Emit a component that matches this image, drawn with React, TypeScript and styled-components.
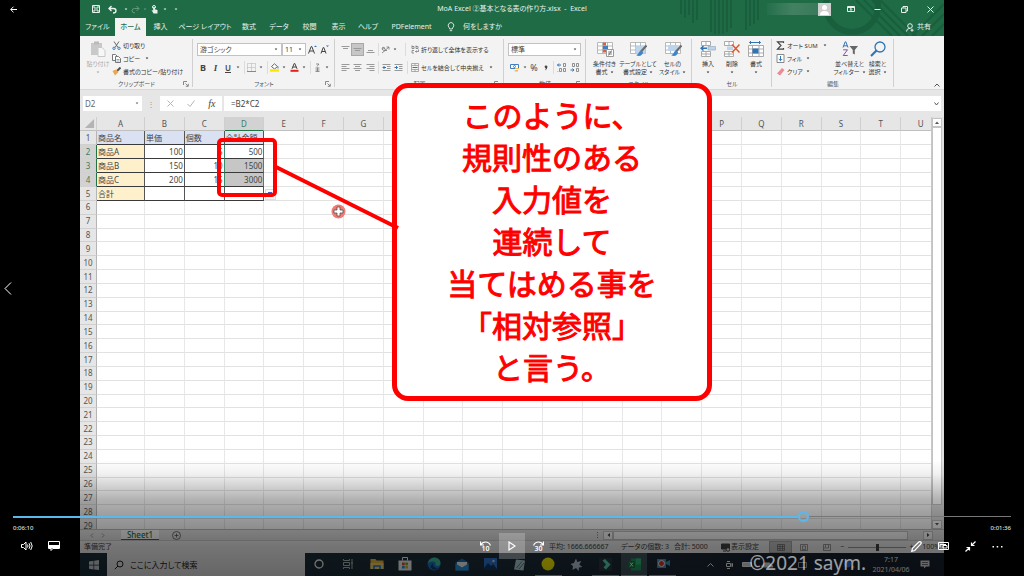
import React from "react";
import styled, { createGlobalStyle, css } from "styled-components";

const GlobalStyle = createGlobalStyle`
  *, *::before, *::after { box-sizing: border-box; }
  body {
    margin: 0;
    background: #000;
    font-family: "Noto Sans", "Noto Sans CJK JP", sans-serif;
    font-feature-settings: "palt";
    overflow: hidden;
  }
  button, input, select {
    font: inherit;
    font-feature-settings: inherit;
    color: inherit;
    border: 0;
    padding: 0;
    margin: 0;
    background: none;
    min-width: 0;
  }
`;

/* ---------- player shell ---------- */

const Player = styled.main`
  position: relative;
  display: grid;
  grid-template-columns: 80px minmax(0, 1fr) 80px;
  min-height: 100vh;
  background: #000;
`;

const Side = styled.div`
  display: flex;
  flex-direction: column;
  justify-content: space-between;
  align-items: flex-start;
  color: #fff;
`;

const SideButton = styled.button`
  display: flex;
  align-items: center;
  justify-content: center;
  width: 26px;
  height: 18px;
`;

const PrevButton = styled(SideButton)`
  width: 16px;
  height: 26px;
`;

const SideFoot = styled.div`
  height: 18px;
`;

const Frame = styled.section`
  position: relative;
  display: flex;
  flex-direction: column;
  min-width: 0;
  height: 100vh;
  min-height: 400px;
  overflow: hidden;
  background: #e6e6e6;
  color: #444;
  font-size: 7px;
  line-height: 8px;
  white-space: nowrap;
`;

/* ---------- title bar and tabs ---------- */

const Head = styled.header`
  position: relative;
  background: #1e6b46;
  color: #e8f1ec;
`;

const HeadArt = styled.svg`
  position: absolute;
  right: 0;
  top: 0;
  width: 264px;
  height: 36px;
`;

const TitleBar = styled.div`
  position: relative;
  display: grid;
  grid-template-columns: 1fr auto 1fr;
  align-items: center;
  height: 18px;
`;

const QuickTools = styled.div`
  display: flex;
  padding-left: 10px;
`;

const TitleRight = styled.div`
  display: flex;
  align-items: center;
  justify-content: flex-end;
  padding-right: 7px;
`;

const Account = styled.div`
  width: 51px;
  height: 12px;
  background: linear-gradient(90deg, #2a7250, #5b8f75 50%, #4b8568);
  opacity: 0.6;
`;

const Tool = styled.button<{ $w: number; $on?: boolean; $faint?: boolean }>`
  display: flex;
  align-items: center;
  justify-content: center;
  flex: none;
  width: ${(p) => p.$w}px;
  height: 13px;
  opacity: ${(p) => (p.$faint ? 0.35 : 1)};
  ${(p) =>
    p.$on &&
    css`
      background: #c6c6c6;
      outline: 1px solid #a8a8a8;
      outline-offset: -1px;
    `}
`;

const TabRow = styled.nav`
  position: relative;
  display: flex;
  align-items: stretch;
  height: 18px;
`;

const Tab = styled.button<{ $w: number; $active?: boolean }>`
  flex: none;
  width: ${(p) => p.$w}px;
  text-align: center;
  ${(p) =>
    p.$active &&
    css`
      background: #f3f3f3;
      color: #1e6b46;
      font-weight: 500;
    `}
`;

const TellMe = styled.button`
  display: flex;
  align-items: center;
  gap: 8px;
  padding-left: 7px;
`;

const Share = styled.button`
  display: flex;
  align-items: center;
  gap: 3px;
  margin-left: auto;
  padding-right: 13px;
`;

/* ---------- ribbon ---------- */

const Ribbon = styled.div`
  display: flex;
  height: 54px;
  flex: none;
  background: #f3f3f3;
  border-bottom: 1px solid #d8d8d8;
`;

const Group = styled.section<{ $w: number }>`
  position: relative;
  display: flex;
  flex-direction: column;
  flex: none;
  width: ${(p) => p.$w}px;
  &::after {
    content: "";
    position: absolute;
    right: 0;
    top: 3px;
    bottom: 2px;
    width: 1px;
    background: #d0d0d0;
  }
`;

const GroupBody = styled.div`
  display: flex;
  height: 44px;
  padding-left: 4px;
`;

const GroupLabel = styled.div`
  display: grid;
  grid-template-columns: 10px 1fr 10px;
  align-items: center;
  height: 10px;
  text-align: center;
  color: #555;
  font-size: 6px;
`;

const Rows = styled.div`
  display: flex;
  flex-direction: column;
  gap: 5px;
  padding-top: 7px;
`;

const Row = styled.div`
  display: flex;
  align-items: center;
  height: 13px;
`;

const List = styled.div`
  display: flex;
  flex-direction: column;
  padding-top: 3px;
`;

const Command = styled.button`
  display: flex;
  align-items: center;
  gap: 2px;
  height: 13px;
  font-size: 6px;
  color: #333;
`;

const Big = styled.button<{ $w: number; $faint?: boolean }>`
  display: flex;
  flex-direction: column;
  align-items: center;
  gap: 3px;
  width: ${(p) => p.$w}px;
  flex: none;
  padding-top: 5px;
  font-size: 6px;
  color: #333;
  white-space: nowrap;
  opacity: ${(p) => (p.$faint ? 0.4 : 1)};
`;

const BigText = styled.span`
  display: flex;
  flex-direction: column;
  align-items: center;
  height: 16px;
`;

const BigLine = styled.span`
  display: flex;
  align-items: center;
  gap: 2px;
  height: 8px;
`;

const Sep = styled.span<{ $w: number }>`
  width: ${(p) => p.$w}px;
  height: 13px;
  flex: none;
  background: linear-gradient(#dcdcdc, #dcdcdc) center / 1px 100% no-repeat;
`;

const Combo = styled.label<{ $w: number }>`
  display: flex;
  align-items: center;
  width: ${(p) => p.$w}px;
  height: 13px;
  padding: 0 3px 0 2px;
  background: #fff;
  border: 1px solid #c2c2c2;
  select {
    flex: 1;
    appearance: none;
    outline: 0;
    line-height: 9px;
  }
`;

const Collapse = styled.button`
  margin-left: auto;
  align-self: flex-end;
  width: 14px;
  height: 9px;
  display: flex;
  align-items: center;
  justify-content: center;
`;

const EditSpacer = styled.span`
  flex: 1;
  & + button + button {
    margin-right: 4px;
  }
`;

const Strong = styled.b`
  font-size: 9px;
`;

const Italic = styled.i`
  font-size: 9px;
  font-weight: 600;
  font-family: "Liberation Serif", serif;
`;

const Under = styled.u`
  font-size: 8px;
  font-weight: 600;
`;

const Glyph = styled.span`
  font-size: 9px;
  color: #444;
`;

const Icon = styled.svg<{ $w?: number; $h?: number }>`
  display: block;
  flex: none;
  width: ${(p) => p.$w ?? 9}px;
  height: ${(p) => p.$h ?? p.$w ?? 9}px;
  fill: none;
  stroke: currentColor;
  stroke-width: 1;
`;

/* ---------- formula bar ---------- */

const FormulaBar = styled.div`
  display: flex;
  flex: none;
  align-items: center;
  height: 27px;
  padding: 0 3px;
  font-size: 8px;
  line-height: 10px;
`;

const NameBox = styled.label`
  display: flex;
  align-items: center;
  width: 59px;
  height: 15px;
  padding: 0 3px 0 2px;
  background: #fff;
  color: #666;
  input {
    flex: 1;
    width: 40px;
  }
`;

const FormulaTools = styled.div`
  display: flex;
  align-items: center;
  justify-content: space-around;
  width: 62px;
  height: 15px;
  margin-right: 2px;
  background: #fff;
`;

const Handle = styled.span`
  width: 18px;
  text-align: center;
  color: #999;
`;

const FormulaInput = styled.label`
  display: flex;
  align-items: center;
  flex: 1;
  height: 15px;
  padding: 0 2px 0 7px;
  background: #fff;
  input {
    flex: 1;
  }
`;

const Fx = styled.i`
  font-family: "Liberation Serif", serif;
  font-size: 10px;
`;

/* ---------- worksheet ---------- */

const SheetArea = styled.div`
  display: flex;
  flex: 1;
  min-height: 0;
`;

const SheetView = styled.div`
  flex: 1;
  min-width: 0;
  overflow: hidden;
  border-right: 1px solid #c8c8c8;
`;

const Sheet = styled.table`
  width: calc(100% + 10px);
  height: calc(100% + 4px);
  table-layout: fixed;
  border-collapse: separate;
  border-spacing: 0;
  background: #fff;
  font-size: 8px;
  line-height: 12px;
  color: #444;
`;

const NarrowCol = styled.col`
  width: 17px;
`;

const FirstCol = styled.col`
  width: 48px;
`;

const SheetRow = styled.tr<{ $fixed?: boolean }>`
  height: ${(p) => (p.$fixed ? "14px" : "auto")};
`;

const Corner = styled.svg`
  display: block;
  width: 11px;
  height: 11px;
  margin-left: 4px;
`;

const HeadCell = styled.th<{ $sel?: boolean; $row?: boolean }>`
  padding: 0;
  font-weight: 400;
  text-align: center;
  color: ${(p) => (p.$sel ? "#3c7d5c" : "#555")};
  background: ${(p) => (p.$sel ? "#d2d2d2" : "#e6e6e6")};
  border-right: 1px solid ${(p) => (p.$row ? "#b5b5b5" : "#cfcfcf")};
  border-bottom: 1px solid ${(p) => (p.$row ? "#d0d0d0" : "#c0c0c0")};
  ${(p) => p.$sel && (p.$row ? "border-right-color:#217346;" : "border-bottom-color:#217346;")}
`;

const Cell = styled.td<{ $bg?: string; $num?: boolean; $box?: boolean; $pick?: boolean }>`
  padding: 0 1px;
  overflow: hidden;
  text-align: ${(p) => (p.$num ? "right" : "left")};
  background: ${(p) => p.$bg ?? "#fff"};
  border-right: 1px solid ${(p) => (p.$box ? "#555" : "#e8e8e8")};
  border-bottom: 1px solid ${(p) => (p.$box ? "#3a3a3a" : "#e2e2e2")};
  ${(p) => p.$pick && "border-right-color:#3f8a66;"}
`;

const VScroll = styled.div`
  display: flex;
  flex-direction: column;
  width: 12px;
  padding: 1px 1px 0 0;
  background: #e0e0e0;
`;

const ScrollButton = styled.button`
  display: flex;
  align-items: center;
  justify-content: center;
  width: 10px;
  height: 9px;
  flex: none;
  background: #fdfdfd;
  border: 1px solid #c4c4c4;
`;

const VThumb = styled.div`
  flex: 1;
  width: 10px;
  margin-bottom: 15px;
  background: #fff;
  border: 1px solid #c4c4c4;
`;

const SheetTabs = styled.div`
  display: flex;
  flex: none;
  align-items: center;
  height: 11px;
  padding-right: 11px;
  border-top: 1px solid #bbb;
  font-size: 8px;
`;

const SheetTab = styled.button`
  width: 38px;
  height: 10px;
  margin: 0 13px 0 11px;
  background: #fff;
  color: #217346;
  border-bottom: 1px solid #217346;
  line-height: 8px;
  font-weight: 500;
`;

const NavButtons = styled.div`
  display: flex;
  gap: 7px;
  padding: 0 5px 0 10px;
`;

const HScroll = styled.div`
  display: flex;
  flex: 0 1 340px;
  margin-left: auto;
  align-items: center;
`;

const HThumb = styled.div`
  flex: 1;
  height: 9px;
  margin-right: 15px;
  background: #fff;
  border: 1px solid #c4c4c4;
`;

const StatusBar = styled.div`
  display: flex;
  flex: none;
  align-items: center;
  height: 13px;
  padding: 0 4px;
  background: #f3f3f3;
  border-top: 1px solid #cfcfcf;
`;

const StatusRight = styled.div`
  display: flex;
  align-items: center;
  margin-left: auto;
`;

const Stat = styled.span<{ $w: number }>`
  display: flex;
  align-items: center;
  gap: 1px;
  width: ${(p) => p.$w}px;
`;

const ViewButton = styled(Tool)`
  height: 12px;
`;

const ZoomSlider = styled.input`
  appearance: none;
  width: 58px;
  height: 9px;
  margin: 0 1px;
  background: linear-gradient(#999, #999) center / 100% 1px no-repeat;
  &::-webkit-slider-thumb {
    appearance: none;
    width: 3px;
    height: 7px;
    background: #444;
  }
`;

const ZoomText = styled.span`
  width: 24px;
  text-align: right;
`;

/* ---------- windows task bar ---------- */

const TaskBar = styled.footer`
  display: flex;
  flex: none;
  align-items: stretch;
  height: 23px;
  background: linear-gradient(90deg, #1a303a, #1e303c 40%, #17202f);
  color: #fff;
`;

const Start = styled.button`
  display: flex;
  align-items: center;
  justify-content: center;
  width: 27px;
`;

const SearchBox = styled.label`
  display: flex;
  align-items: center;
  gap: 6px;
  width: 198px;
  padding-left: 7px;
  background: #f2f2f2;
  color: #222;
  font-size: 8px;
  line-height: 12px;
  input {
    flex: 1;
  }
  input::placeholder {
    color: #222;
    opacity: 1;
  }
`;

const TaskList = styled.div`
  display: grid;
  grid-template-columns: repeat(13, 1fr);
  width: 372px;
`;

const Task = styled.button<{ $open?: boolean; $active?: boolean }>`
  display: flex;
  align-items: center;
  justify-content: center;
  margin: 0 1px;
  background: ${(p) => (p.$active ? "#42565e" : "none")};
  border-bottom: 1px solid ${(p) => (p.$open ? "#9cc3e6" : "transparent")};
`;

const Tray = styled.div`
  display: flex;
  align-items: center;
  margin-left: auto;
  padding-right: 14px;
`;

const Clock = styled.time`
  width: 40px;
  margin-right: 9px;
  text-align: center;
  line-height: 10px;
`;

/* ---------- annotation layer ---------- */

const MarkBox = styled.div`
  position: absolute;
  left: 137px;
  top: 138px;
  width: 60px;
  height: 59px;
  border: 4px solid #f00;
  border-radius: 5px;
`;

const Pointer = styled.svg`
  position: absolute;
  left: 190px;
  top: 160px;
  width: 140px;
  height: 76px;
`;

const PasteOption = styled.div`
  position: absolute;
  left: 185px;
  top: 189px;
  width: 11px;
  height: 11px;
  padding: 2px;
  background: #fafafa;
  border: 1px solid #ddd;
  &::before {
    content: "";
    display: block;
    width: 4px;
    height: 3px;
    background: #3c5ec0;
  }
`;

const Callout = styled.aside`
  position: absolute;
  left: 312px;
  top: 83px;
  width: 320px;
  padding: 5px 0 9px;
  background: #fff;
  border: 5px solid #f00;
  border-radius: 16px;
  color: #f00;
  font-family: "Noto Sans CJK JP", sans-serif;
  font-feature-settings: normal;
  font-size: 30px;
  font-weight: 400;
  -webkit-text-stroke: 1px #f00;
  line-height: 42px;
  text-align: center;
  p {
    margin: 0;
  }
`;

const Watermark = styled.div`
  position: absolute;
  right: 158px;
  bottom: 0;
  font-size: 19px;
  line-height: 26px;
  white-space: nowrap;
  color: #fff;
  opacity: 0.6;
`;

/* ---------- player controls ---------- */

const Shade = styled.div`
  position: absolute;
  left: 0;
  right: 0;
  bottom: 0;
  height: 116px;
  background: linear-gradient(
    rgba(0, 0, 0, 0),
    rgba(0, 0, 0, 0.06) 12%,
    rgba(0, 0, 0, 0.3) 34%,
    rgba(0, 0, 0, 0.42) 54%,
    rgba(0, 0, 0, 0.52) 74%,
    rgba(0, 0, 0, 0.58)
  );
`;

const Controls = styled.div`
  position: absolute;
  left: 0;
  right: 0;
  bottom: 17px;
  padding: 0 13px;
  color: #fff;
`;

const Seek = styled.input`
  display: block;
  appearance: none;
  width: 100%;
  height: 11px;
  &::-webkit-slider-thumb {
    appearance: none;
    width: 11px;
    height: 11px;
    border: 2px solid #5cb8ea;
    border-radius: 50%;
    background: transparent;
  }
`;

const Times = styled.div`
  display: flex;
  justify-content: space-between;
  font-size: 6px;
  line-height: 8px;
  padding-top: 2px;
  height: 11px;
`;

const Buttons = styled.div`
  display: grid;
  grid-template-columns: 1fr auto 1fr;
  height: 26px;
`;

const ButtonSet = styled.div<{ $end?: boolean }>`
  display: flex;
  justify-content: ${(p) => (p.$end ? "flex-end" : "flex-start")};
`;

const Control = styled.button<{ $on?: boolean }>`
  display: flex;
  align-items: center;
  justify-content: center;
  width: ${(p) => (p.$on ? 26 : 27)}px;
  height: 26px;
  background: ${(p) => (p.$on ? "rgba(255,255,255,0.22)" : "none")};
`;

const SkipBox = styled.span`
  display: flex;
  flex-direction: column;
  align-items: center;
  font-size: 7px;
  line-height: 6px;
  font-weight: 600;
`;

/* ---------- small drawings ---------- */

const Caret = ({ label }: { label?: string }) => (
  <Icon $w={4} $h={3} viewBox="0 0 4 3" aria-label={label}>
    <path d="M0.700 0.500h2.600L2 2.200z" fill="currentColor" stroke="none" />
  </Icon>
);

const Launcher = () => (
  <Icon $w={6} viewBox="0 0 6 6" strokeWidth={0.8}>
    <path d="M0.500 4V0.500H4M2.500 2.500l2.500 2.500M5.300 2.800v2.500H2.800" stroke="#888" />
  </Icon>
);

const Lines = ({ d }: { d: string }) => (
  <Icon $w={9} viewBox="0 0 9 9">
    <path d={d} stroke="#9a9a9a" />
  </Icon>
);

const GridArt = ({ children }: { children?: React.ReactNode }) => (
  <Icon $w={18} $h={16} viewBox="0 0 18 16">
    <path d="M1.500 1.500h15v11h-15zM1.500 5h15M1.500 9h15M6.500 1.500v11M11.500 1.500v11" fill="#fff" stroke="#a9a9a9" strokeWidth="0.800" />
    {children}
  </Icon>
);

const Brush = () => (
  <>
    <path d="M17.500 4.500L12 10.500" stroke="#6b6b6b" strokeWidth="2" />
    <path d="M12.500 9.500c-3 0-2 4-5.500 4.500c3 2 7 0.500 7-3z" fill="#3f86c8" stroke="none" />
  </>
);

const A_LEFT = "M0.500 1.500h8M0.500 3.500h5M0.500 5.500h8M0.500 7.500h5";
const A_CENTER = "M0.500 1.500h8M2 3.500h5M0.500 5.500h8M2 7.500h5";
const A_RIGHT = "M0.500 1.500h8M3.500 3.500h5M0.500 5.500h8M3.500 7.500h5";

/* ---------- data ---------- */

const tabs: [string, number][] = [
  ["ファイル", 35],
  ["ホーム", 31],
  ["挿入", 29],
  ["ページ レイアウト", 60],
  ["数式", 28],
  ["データ", 32],
  ["校閲", 29],
  ["表示", 29],
  ["ヘルプ", 30],
  ["PDFelement", 57],
];

const columns = "ABCDEFGHIJKLMNOPQRSTU".split("");

const data: string[][] = [
  ["商品名", "単価", "個数", "合計金額"],
  ["商品A", "100", "5", "500"],
  ["商品B", "150", "10", "1500"],
  ["商品C", "200", "15", "3000"],
  ["合計", "", "", ""],
];

const message = ["このように、", "規則性のある", "入力値を", "連続して", "当てはめる事を", "「相対参照」", "と言う。"];

const cellFill = (r: number, c: number) => {
  if (r === 0) return "#d9e1f2";
  if (c === 0) return "#fff0cc";
  if (c === 3 && (r === 2 || r === 3)) return "#c6c6c6";
  return "#fff";
};

/* ---------- sections ---------- */

const TopBar = () => (
  <Head>
    <HeadArt viewBox="0 0 264 36" fill="none" stroke="#195f3d" strokeWidth="2">
      <path d="M1 0v14M5 0v18M9 0v15M13 0v23M17 0v20M31 0v32M35 0v34M39 0v34M43 0v34M47 0v32M51 0v28M66 0v30M70 0v26M74 0v24M78 0v20" />
      <circle cx="172" cy="6" r="26" strokeWidth="6" />
      <path d="M176 0l36 36M184 0l36 36M192 0l36 36M200 0l36 36M264 4l-32 32M264 14l-22 22M264 24l-12 12" />
    </HeadArt>
    <TitleBar>
      <QuickTools>
        <Tool $w={12} aria-label="上書き保存">
          <Icon $w={8} viewBox="0 0 8 8"><path d="M0.500 0.500h7v7h-7zM2 0.500v2.500h4V0.500M2 7.500V5h4v2.500" /></Icon>
        </Tool>
        <Tool $w={21} aria-label="元に戻す">
          <Icon $w={9} viewBox="0 0 9 9"><path d="M3.500 1L1 3.500 3.500 6M1 3.500h4.500q2.500 0 2.500 2.200T5 8" strokeWidth="1.400" /></Icon>
        </Tool>
        <Tool $w={5}><Caret label="元に戻す一覧" /></Tool>
        <Tool $w={14} $faint aria-label="やり直し">
          <Icon $w={9} viewBox="0 0 9 9"><path d="M5.500 1L8 3.500 5.500 6M8 3.500H3.500Q1 3.500 1 5.700T4 8" /></Icon>
        </Tool>
        <Tool $w={6} $faint><Caret label="やり直し一覧" /></Tool>
        <Tool $w={13} aria-label="タッチ/マウス モード">
          <Icon $w={7} $h={9} viewBox="0 0 7 9"><circle cx="3" cy="2" r="1.500" /><path d="M2.200 2v3.500L0.500 5 2.500 8.500h4V5L3.800 4.300V2z" fill="currentColor" stroke="none" /></Icon>
        </Tool>
        <Tool $w={7}><Caret label="モード一覧" /></Tool>
        <Tool $w={15}><Caret label="クイック アクセス ツール バーのユーザー設定" /></Tool>
      </QuickTools>
      <span>MoA Excel ②基本となる表の作り方.xlsx&nbsp; -&nbsp; Excel</span>
      <TitleRight>
        <Account />
        <Icon $w={13} viewBox="0 0 13 13">
          <path d="M0 0h13v13H0z" fill="#cfcfcf" stroke="none" />
          <circle cx="6.500" cy="4.500" r="2.500" fill="#fff" stroke="none" />
          <path d="M2 12q0-4 4.500-4T11 12z" fill="#fff" stroke="none" />
        </Icon>
        <Tool $w={40} aria-label="リボンの表示オプション">
          <Icon $w={8} $h={6} viewBox="0 0 8 6"><path d="M0.500 0.500h7v5h-7zM0.500 1.500h7M4 5V2.500M2.800 3.700L4 2.500l1.200 1.200" /></Icon>
        </Tool>
        <Tool $w={13} aria-label="最小化"><Icon $w={7} viewBox="0 0 7 7"><path d="M0.500 3.500h6" /></Icon></Tool>
        <Tool $w={40} aria-label="元のサイズに戻す"><Icon $w={7} viewBox="0 0 7 7"><path d="M0.500 2h4.500v4.500H0.500zM2 2V0.500h4.500V5H5" /></Icon></Tool>
        <Tool $w={13} aria-label="閉じる"><Icon $w={7} viewBox="0 0 7 7"><path d="M0.500 0.500l6 6M6.500 0.500l-6 6" /></Icon></Tool>
      </TitleRight>
    </TitleBar>
    <TabRow>
      {tabs.map(([name, w]) => (
        <Tab key={name} $w={w} $active={name === "ホーム"}>{name}</Tab>
      ))}
      <TellMe>
        <Icon $w={8} $h={10} viewBox="0 0 8 10"><path d="M2.700 7Q2.700 5.800 1.700 5A2.800 2.800 0 1 1 6.300 5Q5.300 5.800 5.300 7zM2.800 8.700h2.400" strokeWidth="0.900" /></Icon>
        何をしますか
      </TellMe>
      <Share>
        <Icon $w={8} $h={9} viewBox="0 0 8 9"><circle cx="4" cy="3" r="2.300" /><path d="M0.500 8.500Q0.500 5.500 4 5.300M4.500 7.200h3M6 5.700v3" /></Icon>
        共有
      </Share>
    </TabRow>
  </Head>
);

const ClipboardGroup = () => (
  <Group $w={113}>
    <GroupBody>
      <Big $w={28} $faint>
        <Icon $w={16} viewBox="0 0 16 16">
          <path d="M1 2h11v12H1z" fill="#8d8d8d" stroke="none" />
          <path d="M4 0.500h5v3H4z" fill="#666" stroke="none" />
          <path d="M8 6.500h4l3 3v6H8z" fill="#fff" stroke="#888" />
        </Icon>
        <BigText><BigLine>貼り付け</BigLine><BigLine><Caret /></BigLine></BigText>
      </Big>
      <List>
        <Command>
          <Icon viewBox="0 0 9 9"><path d="M2 0.500l4 6M7 0.500l-4 6" stroke="#666" /><circle cx="2" cy="7.300" r="1.200" stroke="#3f7fc0" /><circle cx="7" cy="7.300" r="1.200" stroke="#3f7fc0" /></Icon>
          切り取り
        </Command>
        <Command>
          <Icon viewBox="0 0 9 9"><path d="M0.500 0.500h3l1.500 1.500v4.500h-4.500z" fill="#fff" stroke="#777" /><path d="M3.500 2.500h3l2 2v4h-5z" fill="#fff" stroke="#777" /><path d="M4.500 5.500h3M4.500 7h3" stroke="#4a87c4" strokeWidth="0.700" /></Icon>
          コピー&nbsp;&nbsp;<Caret />
        </Command>
        <Command>
          <Icon viewBox="0 0 9 9"><path d="M8.500 0.500L5 4" stroke="#555" strokeWidth="2" /><path d="M0.500 4l3.500-1.500L6.500 5 3 8.500z" fill="#eda64b" stroke="none" /></Icon>
          書式のコピー/貼り付け
        </Command>
      </List>
    </GroupBody>
    <GroupLabel><span /><span>クリップボード</span><Launcher /></GroupLabel>
  </Group>
);

const FontGroup = () => (
  <Group $w={142}>
    <GroupBody>
      <Rows>
        <Row>
          <Combo $w={85}>
            <select aria-label="フォント"><option>游ゴシック</option></select>
            <Caret />
          </Combo>
          <Combo $w={24}>
            <select aria-label="フォント サイズ"><option>11</option></select>
            <Caret />
          </Combo>
          <Tool $w={12} aria-label="フォント サイズの拡大">
            <Icon viewBox="0 0 9 9"><path d="M0.500 8.500L3.200 1.500h0.600L6.500 8.500M1.500 6h4" stroke="#444" /><path d="M6 2l1.500-1.500L9 2z" fill="#2f75b5" stroke="none" /></Icon>
          </Tool>
          <Tool $w={13} aria-label="フォント サイズの縮小">
            <Icon viewBox="0 0 9 9"><path d="M1 8.500L3.200 2.500h0.600L6 8.500M1.800 6.500h3.400" stroke="#444" /><path d="M6 0.500h3L7.500 2z" fill="#2f75b5" stroke="none" /></Icon>
          </Tool>
        </Row>
        <Row>
          <Tool $w={12}><Strong>B</Strong></Tool>
          <Tool $w={13}><Italic>I</Italic></Tool>
          <Tool $w={12}><Under>U</Under></Tool>
          <Tool $w={8}><Caret label="下線" /></Tool>
          <Sep $w={4} />
          <Tool $w={11} aria-label="罫線"><Icon viewBox="0 0 9 9"><path d="M0.500 0.500h8v8h-8zM4.500 0.500v8M0.500 4.500h8" stroke="#b0b0b0" strokeDasharray="1 1" /><path d="M0 8.500h9" stroke="#888" /></Icon></Tool>
          <Tool $w={8}><Caret label="罫線一覧" /></Tool>
          <Sep $w={4} />
          <Tool $w={11} aria-label="塗りつぶしの色"><Icon viewBox="0 0 9 9"><path d="M1.500 3.500L4.500 0.800l3 2.700-3 2.500z" fill="#fff" stroke="#666" /><path d="M8 3.500v2" stroke="#3f7fc0" /><path d="M0 7.500h9" stroke="#ffe600" strokeWidth="2.400" /></Icon></Tool>
          <Tool $w={8}><Caret label="塗りつぶし一覧" /></Tool>
          <Tool $w={12} aria-label="フォントの色"><Icon viewBox="0 0 9 9"><path d="M2 5.800L4.200 0.500h0.600L7 5.800M2.800 4h3.400" stroke="#444" /><path d="M0.500 7.800h8" stroke="#e8201a" strokeWidth="2" /></Icon></Tool>
          <Tool $w={8}><Caret label="色一覧" /></Tool>
          <Sep $w={4} />
          <Tool $w={10} aria-label="ふりがなの表示"><Icon viewBox="0 0 9 9"><path d="M3 1h3L4 3.500M2.500 5h4M2.500 7h4M2.500 8.500h4M4.500 4.500v4" stroke="#777" strokeWidth="0.800" /></Icon></Tool>
          <Tool $w={10}><Caret label="ふりがな一覧" /></Tool>
        </Row>
      </Rows>
    </GroupBody>
    <GroupLabel><span /><span>フォント</span><Launcher /></GroupLabel>
  </Group>
);

const AlignGroup = () => (
  <Group $w={169}>
    <GroupBody>
      <Rows>
        <Row>
          <Tool $w={12} aria-label="上揃え"><Lines d="M0.500 1.500h8M2 3.500h5" /></Tool>
          <Tool $w={13} $on aria-label="上下中央揃え"><Lines d="M0.500 3.500h8M2 5.500h5" /></Tool>
          <Tool $w={12} aria-label="下揃え"><Lines d="M2 5.500h5M0.500 7.500h8" /></Tool>
          <Sep $w={4} />
          <Tool $w={11} aria-label="方向"><Icon viewBox="0 0 9 9"><path d="M1 8L8 2M5.500 2H8v2.500M1 3q2-2 3 1t-2 1 2-2M4 6q1-2 2 0" stroke="#777" strokeWidth="0.800" /></Icon></Tool>
          <Tool $w={8}><Caret label="方向一覧" /></Tool>
          <Sep $w={12} />
          <Command>
            <Icon $w={8} $h={9} viewBox="0 0 8 9"><path d="M1 0.500v3h2v-2H1M5 0.500v3h2v-2H5M3 5.500H1v2.500h2M4.500 6.500h3V4.500M5.500 5.500l-1 1 1 1" stroke="#777" strokeWidth="0.800" /></Icon>
            折り返して全体を表示する
          </Command>
        </Row>
        <Row>
          <Tool $w={12} aria-label="左揃え"><Lines d={A_LEFT} /></Tool>
          <Tool $w={13} aria-label="中央揃え"><Lines d={A_CENTER} /></Tool>
          <Tool $w={12} aria-label="右揃え"><Lines d={A_RIGHT} /></Tool>
          <Sep $w={4} />
          <Tool $w={12} aria-label="インデントを減らす"><Icon viewBox="0 0 9 9"><path d="M0.500 1.500h8M5 3.500h3.500M5 5.500h3.500M0.500 7.500h8" stroke="#999" /><path d="M4 4.500H1M2.500 3L1 4.500 2.500 6" stroke="#2f75b5" /></Icon></Tool>
          <Tool $w={12} aria-label="インデントを増やす"><Icon viewBox="0 0 9 9"><path d="M0.500 1.500h8M5 3.500h3.500M5 5.500h3.500M0.500 7.500h8" stroke="#999" /><path d="M0.500 4.500h3M2 3l1.500 1.500L2 6" stroke="#2f75b5" /></Icon></Tool>
          <Sep $w={7} />
          <Command>
            <Icon $w={8} $h={9} viewBox="0 0 8 9"><path d="M0.500 0.500h7v8h-7zM0.500 2.500h7M0.500 6.500h7M4 0.500v2M4 6.500v2" stroke="#999" strokeWidth="0.800" /><path d="M1.500 4.500h5" stroke="#2f75b5" /></Icon>
            セルを結合して中央揃え&nbsp;&nbsp;<Caret />
          </Command>
        </Row>
      </Rows>
    </GroupBody>
    <GroupLabel><span /><span>配置</span><Launcher /></GroupLabel>
  </Group>
);

const NumberGroup = () => (
  <Group $w={82}>
    <GroupBody>
      <Rows>
        <Row>
          <Combo $w={73}>
            <select aria-label="数値の書式"><option>標準</option></select>
            <Caret />
          </Combo>
        </Row>
        <Row>
          <Tool $w={14} aria-label="通貨表示形式"><Icon $w={10} $h={9} viewBox="0 0 10 9"><path d="M0.500 1.500h8v4h-8z" fill="#fff" stroke="#3f7fc0" /><circle cx="4.500" cy="3.500" r="1" stroke="#3f7fc0" /><path d="M5 5h4v1H5zM5 7h3v1.500H4.500z" fill="#efb65c" stroke="none" /></Icon></Tool>
          <Tool $w={6}><Caret label="通貨一覧" /></Tool>
          <Tool $w={12}><Glyph>%</Glyph></Tool>
          <Tool $w={11} aria-label="桁区切り"><Icon $w={4} $h={6} viewBox="0 0 5 7"><circle cx="2.500" cy="2" r="1.700" fill="#444" stroke="none" /><path d="M4.200 2q0 3.500-3 4.500 1.500-2 1-3.500z" fill="#444" stroke="none" /></Icon></Tool>
          <Sep $w={4} />
          <Tool $w={13} aria-label="小数点以下の表示桁数を増やす"><Icon viewBox="0 0 9 9"><path d="M4 2H0.500M2 0.500L0.500 2 2 3.500" stroke="#2f75b5" /><path d="M6.500 0.500h2v3h-2zM2.500 5.500h2v3h-2zM6.500 5.500h2v3h-2zM0.500 8.500h0.700" stroke="#777" strokeWidth="0.800" /></Icon></Tool>
          <Tool $w={13} aria-label="小数点以下の表示桁数を減らす"><Icon viewBox="0 0 9 9"><path d="M0.500 7H4M2.500 5.500L4 7 2.500 8.500" stroke="#2f75b5" /><path d="M2.500 0.500h2v3h-2zM6.500 0.500h2v3h-2zM6.500 5.500h2v3h-2z" stroke="#777" strokeWidth="0.800" /></Icon></Tool>
        </Row>
      </Rows>
    </GroupBody>
    <GroupLabel><span /><span>数値</span><Launcher /></GroupLabel>
  </Group>
);

const StyleGroup = () => (
  <Group $w={106}>
    <GroupBody>
      <Big $w={29}>
        <GridArt>
          <path d="M7 1.500h3v3H7zM7 8.500h4v3H7z" fill="#e0603a" stroke="none" />
          <path d="M7 4.800h5v3.500H7z" fill="#3f7fc0" stroke="none" />
          <path d="M10.500 8.500h7v7h-7z" fill="#fff" stroke="#999" />
          <path d="M12 11h4M12 13h4M15.500 9.500l-3 5" stroke="#555" strokeWidth="0.700" />
        </GridArt>
        <BigText><BigLine>条件付き</BigLine><BigLine>書式 <Caret /></BigLine></BigText>
      </Big>
      <Big $w={38}>
        <GridArt>
          <path d="M6.500 5h10v7.500h-10z" fill="#bcd5ec" stroke="none" />
          <Brush />
        </GridArt>
        <BigText><BigLine>テーブルとして</BigLine><BigLine>書式設定 <Caret /></BigLine></BigText>
      </Big>
      <Big $w={31}>
        <GridArt>
          <path d="M4 4h10v6H4z" fill="#bcd5ec" stroke="none" />
          <Brush />
        </GridArt>
        <BigText><BigLine>セルの</BigLine><BigLine>スタイル <Caret /></BigLine></BigText>
      </Big>
    </GroupBody>
    <GroupLabel><span /><span>スタイル</span><span /></GroupLabel>
  </Group>
);

const CellsGroup = () => (
  <Group $w={80}>
    <GroupBody>
      <Big $w={24}>
        <Icon $w={16} viewBox="0 0 16 16"><path d="M1.500 0.500h9v4h-9zM6 0.500v4M1.500 10.500h9v5h-9zM6 10.500v5M1.500 13h9" fill="#fff" stroke="#aaa" /><path d="M8 5.500h7.500v3.500H8z" fill="#bcd5ec" stroke="#9ab" strokeWidth="0.700" /><path d="M7 7.200H1M3.500 5L1 7.200 3.500 9.500" stroke="#2f75b5" strokeWidth="1.400" /></Icon>
        <BigText><BigLine>挿入</BigLine><BigLine><Caret /></BigLine></BigText>
      </Big>
      <Big $w={24}>
        <Icon $w={16} viewBox="0 0 16 16"><path d="M0.500 0.500h9v4h-9zM5 0.500v4M0.500 10.500h9v5h-9zM5 10.500v5M0.500 13h9" fill="#fff" stroke="#aaa" /><path d="M3 5.500h6v3.500H3z" fill="#bcd5ec" stroke="none" /><path d="M8 3.500l7.500 8M15.500 3.500l-7.500 8" stroke="#d9592f" strokeWidth="1.500" /></Icon>
        <BigText><BigLine>削除</BigLine><BigLine><Caret /></BigLine></BigText>
      </Big>
      <Big $w={24}>
        <Icon $w={16} viewBox="0 0 16 16"><path d="M1.500 1.500h11M3 0L1.500 1.500 3 3M11 0l1.500 1.500L11 3" stroke="#2f75b5" /><path d="M0.500 4.500h15v11h-15zM0.500 8h15M0.500 12h15M4.500 4.500v11M11 4.500v11" fill="#fff" stroke="#aaa" /><path d="M4.500 7.500h6v5h-6z" fill="#2f75b5" stroke="none" /></Icon>
        <BigText><BigLine>書式</BigLine><BigLine><Caret /></BigLine></BigText>
      </Big>
    </GroupBody>
    <GroupLabel><span /><span>セル</span><span /></GroupLabel>
  </Group>
);

const EditGroup = () => (
  <Group $w={122}>
    <GroupBody>
      <List>
        <Command>
          <Icon viewBox="0 0 9 9"><path d="M7.500 2V0.800h-6L5 4.500 1.500 8.200h6V7" stroke="#444" strokeWidth="1.200" /></Icon>
          オート SUM&nbsp;&nbsp;<Caret />
        </Command>
        <Command>
          <Icon viewBox="0 0 9 9"><path d="M1 0.500h7v8H1z" fill="#fff" stroke="#888" /><path d="M4.500 2v4.500M2.800 5l1.700 1.700L6.200 5" stroke="#2f75b5" /></Icon>
          フィル&nbsp;<Caret />
        </Command>
        <Command>
          <Icon viewBox="0 0 9 9"><path d="M1 6.500L6 1l2.500 2L4 8.500z" fill="#ea8c93" stroke="none" /></Icon>
          クリア&nbsp;<Caret />
        </Command>
      </List>
      <EditSpacer />
      <Big $w={31}>
        <Icon $w={16} viewBox="0 0 16 16"><path d="M1 6.500L3.200 0.800h0.600L6 6.500M1.700 4.800h3.600" stroke="#2f75b5" /><path d="M1.200 8.800h4.300l-4.300 5.700h4.500" stroke="#8b4fb0" /><path d="M7.500 5h8.500l-3.200 4v4.500l-2-1V9z" fill="#666" stroke="none" /></Icon>
        <BigText><BigLine>並べ替えと</BigLine><BigLine>フィルター <Caret /></BigLine></BigText>
      </Big>
      <Big $w={25}>
        <Icon $w={16} viewBox="0 0 16 16"><circle cx="10" cy="6" r="5" stroke="#2f75b5" strokeWidth="1.300" /><path d="M6.500 9.500L1 15" stroke="#2f75b5" strokeWidth="2.200" /></Icon>
        <BigText><BigLine>検索と</BigLine><BigLine>選択 <Caret /></BigLine></BigText>
      </Big>
    </GroupBody>
    <GroupLabel><span /><span>編集</span><span /></GroupLabel>
  </Group>
);

const Formula = () => (
  <FormulaBar>
    <NameBox>
      <input aria-label="名前ボックス" defaultValue="D2" />
      <Caret />
    </NameBox>
    <Handle>⋮</Handle>
    <FormulaTools>
      <Icon $w={7} viewBox="0 0 7 7"><path d="M0.500 0.500l6 6M6.500 0.500l-6 6" stroke="#b5b5b5" /></Icon>
      <Icon $w={8} $h={7} viewBox="0 0 8 7"><path d="M0.500 4l2.500 2.500L7.500 0.500" stroke="#b5b5b5" /></Icon>
      <Fx>fx</Fx>
    </FormulaTools>
    <FormulaInput>
      <input aria-label="数式バー" defaultValue="=B2*C2" />
      <Icon $w={5} $h={4} viewBox="0 0 5 4"><path d="M0.500 0.500L2.500 3 4.500 0.500" stroke="#555" /></Icon>
    </FormulaInput>
  </FormulaBar>
);

const Worksheet = () => (
  <SheetArea>
    <SheetView>
      <Sheet>
        <colgroup>
          <NarrowCol />
          <FirstCol />
          <col span={20} />
        </colgroup>
        <thead>
          <SheetRow $fixed>
            <HeadCell aria-label="すべて選択">
              <Corner viewBox="0 0 12 12"><path d="M11 1v10H1z" fill="#b4b4b4" /></Corner>
            </HeadCell>
            {columns.map((c) => (
              <HeadCell key={c} scope="col" $sel={c === "D"}>{c}</HeadCell>
            ))}
          </SheetRow>
        </thead>
        <tbody>
          {Array.from({ length: 29 }, (_, r) => (
            <SheetRow key={r} $fixed={r < 5}>
              <HeadCell scope="row" $row $sel={r > 0 && r < 4}>{r + 1}</HeadCell>
              {columns.map((c, i) => (
                <Cell
                  key={c}
                  $bg={r < 5 && i < 4 ? cellFill(r, i) : undefined}
                  $box={r < 5 && i < 4}
                  $num={r > 0 && i > 0}
                  $pick={r > 0 && r < 4 && (i === 3 || i === 2)}
                >
                  {data[r]?.[i]}
                </Cell>
              ))}
            </SheetRow>
          ))}
        </tbody>
      </Sheet>
    </SheetView>
    <VScroll>
      <ScrollButton aria-label="上へ"><Icon $w={4} $h={3} viewBox="0 0 4 3"><path d="M0 3h4L2 0.500z" fill="#555" stroke="none" /></Icon></ScrollButton>
      <VThumb />
      <ScrollButton aria-label="下へ"><Icon $w={4} $h={3} viewBox="0 0 4 3"><path d="M0 0h4L2 2.500z" fill="#555" stroke="none" /></Icon></ScrollButton>
    </VScroll>
  </SheetArea>
);

const Bottom = () => (
  <>
    <SheetTabs>
      <NavButtons>
        <Icon $w={4} $h={5} viewBox="0 0 4 5"><path d="M3 0.500L1 2.500 3 4.500" stroke="#999" /></Icon>
        <Icon $w={4} $h={5} viewBox="0 0 4 5"><path d="M1 0.500L3 2.500 1 4.500" stroke="#999" /></Icon>
      </NavButtons>
      <SheetTab>Sheet1</SheetTab>
      <Tool $w={9} aria-label="新しいシート">
        <Icon viewBox="0 0 9 9"><circle cx="4.500" cy="4.500" r="4" strokeWidth="0.700" /><path d="M2.500 4.500h4M4.500 2.500v4" strokeWidth="0.700" /></Icon>
      </Tool>
      <HScroll>
        <Icon $w={10} $h={6} viewBox="0 0 10 6"><path d="M4 0h1v1H4zM4 2.500h1v1H4zM4 5h1v1H4z" fill="#777" stroke="none" /></Icon>
        <ScrollButton aria-label="左へ"><Icon $w={3} $h={4} viewBox="0 0 3 4"><path d="M3 0v4L0.500 2z" fill="#444" stroke="none" /></Icon></ScrollButton>
        <HThumb />
        <ScrollButton aria-label="右へ"><Icon $w={3} $h={4} viewBox="0 0 3 4"><path d="M0 0v4L2.500 2z" fill="#444" stroke="none" /></Icon></ScrollButton>
      </HScroll>
    </SheetTabs>
    <StatusBar>
      <span>準備完了</span>
      <StatusRight>
        <Stat $w={72}>平均: 1666.666667</Stat>
        <Stat $w={53}>データの個数: 3</Stat>
        <Stat $w={47}>合計: 5000</Stat>
        <Stat $w={48}>
          <Icon $w={9} viewBox="0 0 9 9"><path d="M0.500 1h8v5h-8zM2 8h3" fill="#444" /><circle cx="7" cy="6.500" r="1.800" fill="#eee" stroke="#444" /></Icon>
          表示設定
        </Stat>
        <ViewButton $w={23} $on aria-label="標準"><Icon $w={8} $h={7} viewBox="0 0 8 7"><path d="M0.500 0.500h7v6h-7zM0.500 2.500h7M0.500 4.500h7M3 0.500v6M5.500 0.500v6" stroke="#666" strokeWidth="0.700" /></Icon></ViewButton>
        <ViewButton $w={23} aria-label="ページ レイアウト"><Icon $w={8} $h={7} viewBox="0 0 8 7"><path d="M0.500 0.500h7v6h-7zM2.500 2h3v3.500h-3z" stroke="#777" strokeWidth="0.700" /></Icon></ViewButton>
        <ViewButton $w={23} aria-label="改ページ プレビュー"><Icon $w={8} $h={7} viewBox="0 0 8 7"><path d="M0.500 0.500h7v6h-7zM0.500 4h5V0.500M2.500 0.500v3" stroke="#777" strokeWidth="0.700" /></Icon></ViewButton>
        <Tool $w={9}>−</Tool>
        <ZoomSlider type="range" aria-label="ズーム" defaultValue={50} />
        <Tool $w={9}>+</Tool>
        <ZoomText>100%</ZoomText>
      </StatusRight>
    </StatusBar>
  </>
);

const Tasks = () => (
  <TaskBar>
    <Start aria-label="スタート">
      <Icon $w={10} viewBox="0 0 10 10"><path d="M0 1.500l4.500-0.700v4H0zM5.200 0.700L10 0v4.800H5.200zM0 5.500h4.500v4L0 8.800zM5.200 5.500H10V10l-4.800-0.600z" fill="#d0d6da" stroke="none" /></Icon>
    </Start>
    <SearchBox>
      <Icon $w={10} viewBox="0 0 10 10"><circle cx="6" cy="4" r="3" /><path d="M4 6L0.800 9.200" /></Icon>
      <input placeholder="ここに入力して検索" aria-label="検索" />
    </SearchBox>
    <TaskList>
      <Task aria-label="Cortana"><Icon $w={10} viewBox="0 0 10 10"><circle cx="5" cy="5" r="4" strokeWidth="1.300" /></Icon></Task>
      <Task aria-label="タスク ビュー"><Icon $w={10} viewBox="0 0 10 10" opacity={0.7}><path d="M0.500 3.500h6v3h-6zM0.500 0v1.500h6V0M0.500 10V8.500h6V10M9 0v10M8 4h2" /></Icon></Task>
      <Task aria-label="エクスプローラー"><Icon $w={14} $h={12} viewBox="0 0 14 12"><path d="M0.500 1h5l1 1.500h7V11h-13z" fill="#f5c342" stroke="none" /><path d="M0.500 5h13v6h-13z" fill="#ffdf7e" stroke="none" /><path d="M4 11V8h6v3" stroke="#2d7fc4" strokeWidth="1.600" /></Icon></Task>
      <Task aria-label="ストア"><Icon $w={14} viewBox="0 0 14 14"><path d="M0.500 3.500h13v10h-13z" fill="#fff" stroke="none" /><path d="M4.500 3.500v-3h5v3" stroke="#fff" /><path d="M4 5.500h2.700v2.700H4z" fill="#e8532b" stroke="none" /><path d="M7.300 5.500H10v2.700H7.300z" fill="#7db928" stroke="none" /><path d="M4 8.800h2.700v2.700H4z" fill="#1ba1e2" stroke="none" /><path d="M7.300 8.800H10v2.700H7.300z" fill="#fcb813" stroke="none" /></Icon></Task>
      <Task aria-label="Edge"><Icon $w={14} viewBox="0 0 14 14"><circle cx="7" cy="7" r="6.500" fill="#1c77cf" stroke="none" /><path d="M1 6q1-5 6.500-5.500Q13.500 1 13.500 6.500q-0.500 2.500-3.500 2.500-2 0-1.500-1.500Q9 5 6.500 4.500 3 4 1 6z" fill="#3ec9a0" stroke="none" /><path d="M6 6.500q-1 4 5 5-4 2.500-6.500 0T6 6.500z" fill="#123f7c" stroke="none" /></Icon></Task>
      <Task aria-label="メール"><Icon $w={14} $h={13} viewBox="0 0 14 13"><path d="M0.500 4.500L7 0.500l6.500 4v8h-13z" fill="#1874c4" stroke="none" /><path d="M2 4h10v3L7 10 2 7z" fill="#fff" stroke="none" /><path d="M0.500 5.500L7 9.500l6.500-4v7h-13z" fill="#2b9ce8" stroke="none" /></Icon></Task>
      <Task aria-label="フォト"><Icon $w={13} $h={12} viewBox="0 0 13 12"><path d="M0 0h13v12H0z" fill="#2f7ad6" stroke="none" /><path d="M0 10l4-5 3 3 2-2 4 5v1H0z" fill="#12376c" stroke="none" /><circle cx="9.500" cy="3" r="1.200" fill="#cfe4fa" stroke="none" /></Icon></Task>
      <Task aria-label="付箋"><Icon $w={13} viewBox="0 0 13 13"><path d="M3 1.500l9 1-1.500 10-9.500-1z" fill="#b9d6dc" stroke="none" /><path d="M3.500 10L9 3.500M6 11l5-6" stroke="#52808c" /></Icon></Task>
      <Task $open aria-label="ブラウザー"><Icon $w={14} viewBox="0 0 14 14"><circle cx="7" cy="7" r="6.500" fill="#fffa00" stroke="none" /></Icon></Task>
      <Task aria-label="ランチャー"><Icon $w={13} viewBox="0 0 13 13"><path d="M6 0.500l1.300 3.500 4-1-2 3.500 3 2.500-3.500 0.500V13L6 10l-3.500 2 0.500-4-2.500-2 3.500-1z" fill="#c3cfe0" stroke="none" /></Icon></Task>
      <Task $open aria-label="Filmora"><Icon $w={13} viewBox="0 0 13 13"><path d="M0 0h13v13H0z" fill="#2b3840" stroke="none" /><path d="M3.500 2.500L6 1l5.500 5.500-4.500 5-2.500-2L7 6.500z" fill="#5be0c4" stroke="none" /></Icon></Task>
      <Task $open $active aria-label="Excel"><Icon $w={13} viewBox="0 0 13 13"><path d="M3 0.500h10v12H3z" fill="#21a366" stroke="none" /><path d="M8 0.500h5v6H8z" fill="#33c481" stroke="none" /><path d="M0 3h7v7H0z" fill="#107c41" stroke="none" /><path d="M2 4.500l3 4M5 4.500l-3 4" stroke="#fff" /></Icon></Task>
      <Task $open aria-label="録画"><Icon $w={14} $h={12} viewBox="0 0 14 12"><path d="M1 1h9v9H1zM10 4l4-2v6l-4-2z" fill="#36a0c8" stroke="none" /><circle cx="5.500" cy="5.500" r="3" fill="#e33" stroke="#fff" /></Icon></Task>
    </TaskList>
    <Tray>
      <Tool $w={20} aria-label="隠れているインジケーター"><Icon $w={7} $h={4} viewBox="0 0 7 4"><path d="M0.500 3.500l3-3 3 3" /></Icon></Tool>
      <Tool $w={18} aria-label="会議"><Icon $w={7} $h={8} viewBox="0 0 7 8"><path d="M1 0.500h3M1 7.500h3M0.500 2.500h4v3h-4zM4.500 3.500l2-1v3l-2-1" /></Icon></Tool>
      <Tool $w={18} aria-label="バッテリー"><Icon $w={10} $h={5} viewBox="0 0 10 5"><path d="M0.500 0.500h9v4h-9z" fill="#dfe4e8" /></Icon></Tool>
      <Tool $w={22} aria-label="OneDrive"><Icon $w={14} $h={7} viewBox="0 0 14 7"><path d="M2 6.500q-2-2 1-3 1-3 4-2 3-1 4 2 3 0.500 2 3z" fill="#dfe4e8" stroke="none" /></Icon></Tool>
      <Tool $w={48} aria-label="ネットワーク"><Icon $w={9} $h={8} viewBox="0 0 9 8"><path d="M0.500 1.500h8v5h-8z" opacity="0.600" /></Icon></Tool>
      <Tool $w={45} aria-label="入力"><Icon $w={12} $h={9} viewBox="0 0 12 9"><circle cx="4.500" cy="4" r="3.500" fill="#2b76e5" stroke="none" /><circle cx="10" cy="7" r="1.500" fill="#e5482b" stroke="none" /></Icon></Tool>
      <Clock>7:17<br />2021/04/06</Clock>
      <Icon $w={10} $h={9} viewBox="0 0 10 9"><path d="M0.500 0.500h9v6H6l-2 2v-2H0.500z" fill="#e6e6e6" stroke="none" /><path d="M2 2.500h6M2 4.500h6" stroke="#555" strokeWidth="0.800" /></Icon>
    </Tray>
  </TaskBar>
);

const SEEK = 0.795;

const SeekBar = () => (
  <Seek
    type="range"
    aria-label="再生位置"
    min={0}
    max={1}
    step={0.001}
    defaultValue={SEEK}
    style={{
      background: `linear-gradient(#5cb8ea, #5cb8ea) left center / calc((100% - 11px) * ${SEEK}) 2px no-repeat, linear-gradient(#777, #777) right center / calc((100% - 11px) * ${1 - SEEK}) 1px no-repeat`,
    }}
  />
);

const Skip = ({ text, flip }: { text: string; flip?: boolean }) => (
  <SkipBox>
    <Icon $w={11} $h={5} viewBox="0 0 11 5">
      {flip ? (
        <path d="M0.500 4.500Q2 1 5.500 1t4.500 3M10.500 0.500V4H7" strokeWidth="1.200" />
      ) : (
        <path d="M10.500 4.500Q9 1 5.500 1T1 4M0.500 0.500V4H4" strokeWidth="1.200" />
      )}
    </Icon>
    {text}
  </SkipBox>
);

export default function App() {
  return (
    <>
      <GlobalStyle />
      <Player>
        <Side>
          <SideButton aria-label="戻る">
            <Icon $w={7} viewBox="0 0 7 7"><path d="M7 3.500H0.700M3.500 0.700L0.700 3.500 3.500 6.300" /></Icon>
          </SideButton>
          <PrevButton aria-label="前へ">
            <Icon $w={8} $h={13} viewBox="0 0 8 13"><path d="M7 0.500L1 6.500 7 12.500" /></Icon>
          </PrevButton>
          <SideFoot />
        </Side>

        <Frame>
          <TopBar />
          <Ribbon>
            <ClipboardGroup />
            <FontGroup />
            <AlignGroup />
            <NumberGroup />
            <StyleGroup />
            <CellsGroup />
            <EditGroup />
            <Collapse aria-label="リボンを折りたたむ">
              <Icon $w={6} $h={4} viewBox="0 0 6 4"><path d="M0.500 3.500L3 1l2.500 2.500" stroke="#555" /></Icon>
            </Collapse>
          </Ribbon>
          <Formula />
          <Worksheet />
          <Bottom />
          <Tasks />

          <PasteOption />
          <MarkBox />
          <Callout>
            {message.map((line) => (
              <p key={line}>{line}</p>
            ))}
          </Callout>
          <Pointer viewBox="0 0 140 76" fill="none">
            <path d="M6 7l122 61" stroke="#f00" strokeWidth="4" />
            <circle cx="68.500" cy="51.500" r="7" fill="#ee7b74" />
            <path d="M67 47h3v3h3v3h-3v3h-3v-3h-3v-3h3z" fill="#fff" stroke="#444" strokeWidth="0.700" />
          </Pointer>
        </Frame>

        <Side />

        <Shade />
        <Watermark>©2021 saym.</Watermark>
        <Controls>
          <SeekBar />
          <Times>
            <span>0:06:10</span>
            <span>0:01:36</span>
          </Times>
          <Buttons>
            <ButtonSet>
              <Control aria-label="音量"><Icon $w={12} $h={10} viewBox="0 0 12 10"><path d="M0.500 3.500h2L5 1v8L2.500 6.500h-2zM6.500 3.500q1 1.500 0 3M8 2.200q2 2.800 0 5.600M9.700 1q3 4 0 8" /></Icon></Control>
              <Control aria-label="字幕"><Icon $w={12} $h={10} viewBox="0 0 12 10"><path d="M0.500 0.500h11v7H5L3 9.500v-2H0.500z" /><path d="M1 4h10v3.500H1z" fill="currentColor" stroke="none" /></Icon></Control>
            </ButtonSet>
            <ButtonSet>
              <Control aria-label="10 秒戻る"><Skip text="10" /></Control>
              <Control $on aria-label="再生"><Icon $w={8} $h={10} viewBox="0 0 8 10"><path d="M1 1l6 4-6 4z" strokeWidth="1.200" /></Icon></Control>
              <Control aria-label="30 秒進む"><Skip text="30" flip /></Control>
            </ButtonSet>
            <ButtonSet $end>
              <Control aria-label="編集"><Icon $w={11} viewBox="0 0 11 11"><path d="M0.700 10.300l0.800-3 6.300-6.300q1.200-0.800 2 0t0 2L3.700 9.500z" strokeWidth="1.200" /></Icon></Control>
              <Control aria-label="小さいウィンドウ"><Icon $w={11} $h={8} viewBox="0 0 11 8"><path d="M0.500 0.500h10v7h-10zM5 3.500h4v2.500H5zM2 2.500h6M2 2.500v3" /></Icon></Control>
              <Control aria-label="縮小"><Icon $w={11} viewBox="0 0 11 11"><path d="M10.500 0.500L6.500 4.500M6.500 1.500v3h3M0.500 10.500l4-4M4.500 9.500v-3h-3" strokeWidth="1.200" /></Icon></Control>
              <Control aria-label="その他"><Icon $w={11} $h={3} viewBox="0 0 11 3"><path d="M0.500 1h1.500v1.500H0.500zM4.700 1h1.500v1.500H4.700zM9 1h1.500v1.500H9z" fill="currentColor" stroke="none" /></Icon></Control>
            </ButtonSet>
          </Buttons>
        </Controls>
      </Player>
    </>
  );
}
